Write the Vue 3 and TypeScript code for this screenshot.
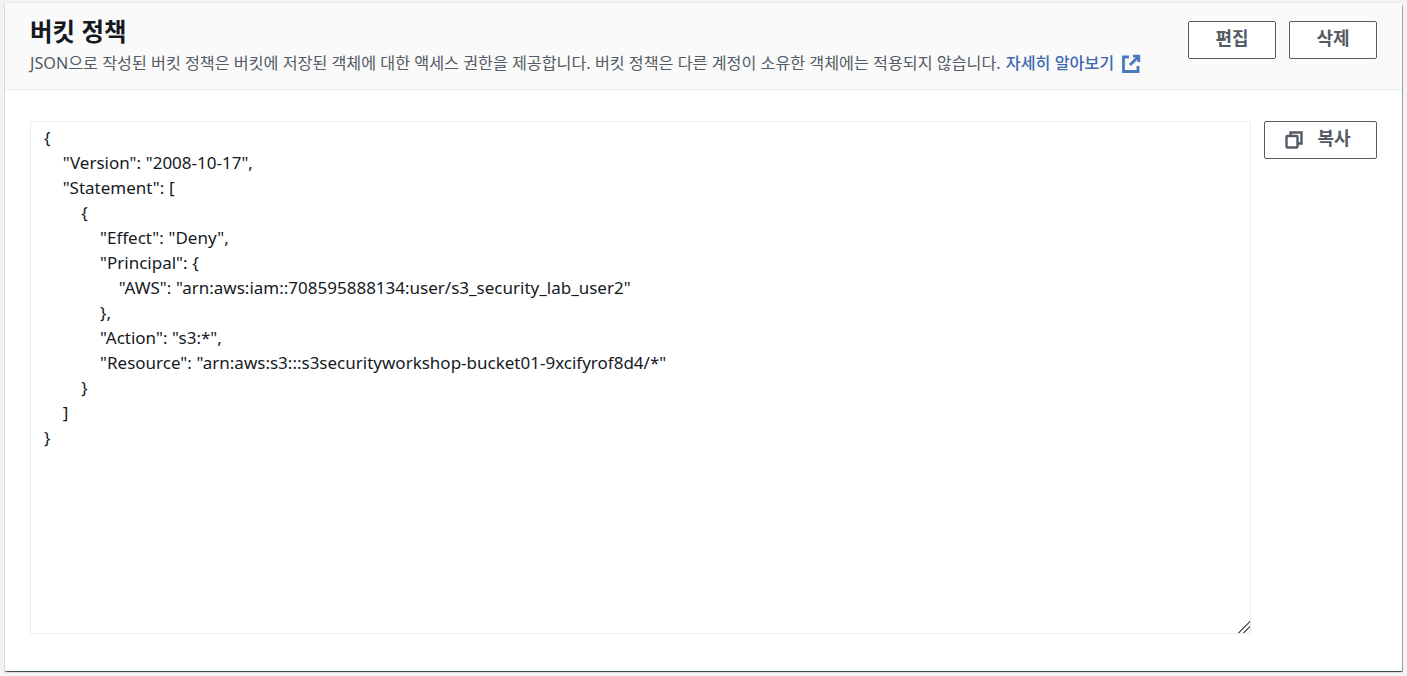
<script setup lang="ts">
const policy = `{
    "Version": "2008-10-17",
    "Statement": [
        {
            "Effect": "Deny",
            "Principal": {
                "AWS": "arn:aws:iam::708595888134:user/s3_security_lab_user2"
            },
            "Action": "s3:*",
            "Resource": "arn:aws:s3:::s3securityworkshop-bucket01-9xcifyrof8d4/*"
        }
    ]
}`
</script>

<template>
  <div class="page">
    <section class="card">
      <header class="head">
        <div class="titles">
          <h2>버킷 정책</h2>
          <p>
            JSON으로 작성된 버킷 정책은 버킷에 저장된 객체에 대한 액세스 권한을 제공합니다. 버킷 정책은 다른 계정이 소유한 객체에는 적용되지 않습니다.
            <a class="link">자세히 알아보기
              <svg class="ext" width="20" height="20" viewBox="0 0 20 20" fill="none" stroke="#4a78bd" stroke-width="2.8">
                <path d="M8 3H2.5v14.5H17V12" />
                <path d="M12 2.2h5.8V8" />
                <path d="M17.5 2.5 9 11" />
              </svg>
            </a>
          </p>
        </div>
        <div class="actions">
          <button class="btn wide">편집</button>
          <button class="btn wide">삭제</button>
        </div>
      </header>
      <div class="body">
        <textarea class="code" readonly :value="policy" spellcheck="false"></textarea>
        <button class="btn copy">
          <svg width="18" height="18" viewBox="0 0 18 18" fill="none" stroke="#545b64" stroke-width="2.4">
            <rect x="1.5" y="5" width="11" height="11.5" rx="1" />
            <path d="M5.5 4.5V1.5h11v11h-3.5" />
          </svg>
          <span>복사</span>
        </button>
      </div>
    </section>
  </div>
</template>

<style scoped>
.page {
  box-sizing: border-box;
  height: 676px;
  padding: 3px 5px 5px 5px;
  background: #f2f3f3;
  font-family: "Noto Sans", "Noto Sans CJK KR", sans-serif;
  overflow: hidden;
}
.card {
  box-sizing: border-box;
  height: 668px;
  background: #fff;
  box-shadow: 0 1px 1px 0 rgba(0, 28, 36, 0.5), 1px 1px 1px -0.5px rgba(0, 28, 36, 0.3), -1px 1px 1px -0.5px rgba(0, 28, 36, 0.3), 0 0 1px 0 rgba(0, 28, 36, 0.12);
  display: flex;
  flex-direction: column;
}
.head {
  box-sizing: border-box;
  height: 87px;
  flex: none;
  background: #fafafa;
  border-bottom: 1px solid #eaeded;
  display: flex;
  justify-content: space-between;
  padding: 14px 25px 0 25px;
}
h2 {
  margin: 0;
  font-size: 24.5px;
  line-height: 30px;
  font-weight: 700;
  color: #16191f;
}
p {
  margin: 5px 0 0;
  font-size: 16.18px;
  line-height: 22px;
  color: #545b64;
  white-space: nowrap;
}
.link {
  color: #3f6ab0;
  font-weight: 500;
  margin-left: 1px;
}
.ext {
  vertical-align: -5px;
  margin-left: 3px;
}
.actions {
  display: flex;
  gap: 13px;
  padding-top: 4px;
}
.btn {
  box-sizing: border-box;
  height: 38px;
  background: #fff;
  border: 1px solid #545b64;
  border-radius: 2px;
  color: #545b64;
  font-family: inherit;
  font-size: 18px;
  font-weight: 700;
  line-height: 22px;
  padding: 0 0 4px;
  display: flex;
  align-items: center;
  justify-content: center;
}
.wide {
  width: 88px;
}
.body {
  flex: 1;
  display: flex;
  align-items: flex-start;
  gap: 14px;
  padding: 31px 25px 0 25px;
}
.code {
  box-sizing: border-box;
  width: 1221px;
  height: 513px;
  flex: none;
  border: 1px solid #eaeded;
  border-radius: 2px;
  padding: 3px 13px;
  margin: 0;
  font-family: "Noto Sans", "Noto Sans CJK KR", sans-serif;
  font-size: 17px;
  word-spacing: 0.25px;
  line-height: 25px;
  color: #16191f;
  background: #fff;
  outline: none;
  resize: both;
  white-space: pre;
  overflow: hidden;
}
.code::-webkit-resizer {
  background: linear-gradient(135deg, transparent 0 58%, #666 58% 64%, transparent 64% 75%, #666 75% 81%, transparent 81%);
}
.copy {
  width: 113px;
  gap: 14px;
  margin-left: -1px;
  padding-right: 5px;
}
.copy svg {
  position: relative;
  top: 2px;
}
</style>
